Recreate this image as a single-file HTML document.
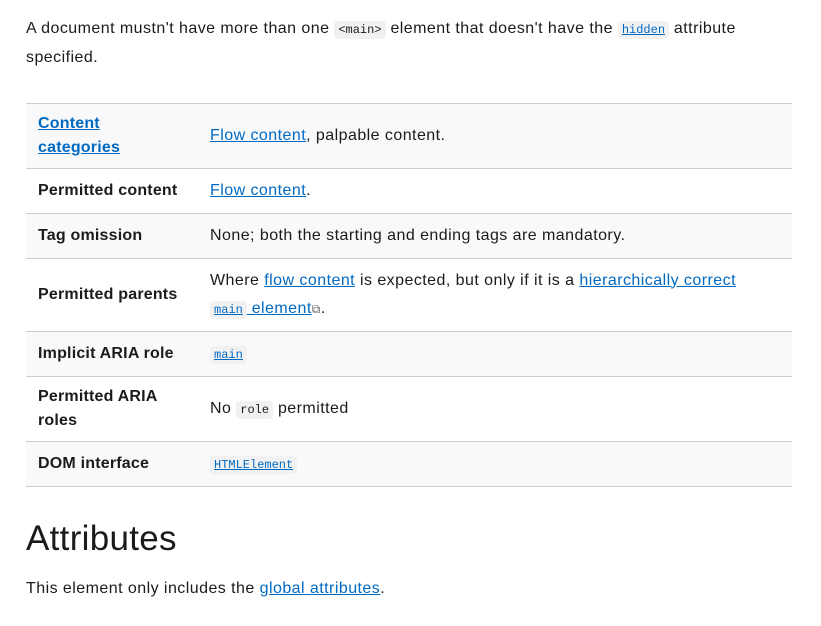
<!DOCTYPE html>
<html><head><meta charset="utf-8"><style>
body{margin:0;background:#fff;font-family:"Liberation Sans",sans-serif;color:#1b1b1b;font-size:16px;letter-spacing:0.45px;}
.w{position:absolute;left:26px;width:766px;}
p{margin:0;line-height:28px;}
a{color:#0069c2;text-decoration:underline;}
code{font-family:"Liberation Mono",monospace;font-size:12px;background:#f2f1f1;border-radius:4px;padding:2px 4px;letter-spacing:0;}
a code{color:#0069c2;}
table{border-collapse:collapse;width:766px;table-layout:fixed;}
td{border-top:1px solid #cdcdcd;border-bottom:1px solid #cdcdcd;padding:0 12px;line-height:24px;}
td:first-child{width:148px;font-weight:bold;letter-spacing:0.2px;}
tr:nth-child(odd) td{background:#f9f9fb;}
h2{margin:0;font-size:35px;font-weight:normal;letter-spacing:0.3px;}
</style></head><body>
<div class="w" style="top:15px"><p>A document mustn't have more than one <code>&lt;main&gt;</code> element that doesn't have the <a href="#"><code>hidden</code></a> attribute specified.</p></div>
<div class="w" style="top:103px"><table>
<tr style="height:65px"><td><a href="#">Content categories</a></td><td><a href="#">Flow content</a>, palpable content.</td></tr>
<tr style="height:45px"><td>Permitted content</td><td><a href="#">Flow content</a>.</td></tr>
<tr style="height:45px"><td>Tag omission</td><td>None; both the starting and ending tags are mandatory.</td></tr>
<tr style="height:73px"><td>Permitted parents</td><td style="line-height:28px">Where <a href="#">flow content</a> is expected, but only if it is a <a href="#">hierarchically correct<br><code>main</code> element</a><span style="font-size:12px;color:#666">⧉</span>.</td></tr>
<tr style="height:45px"><td>Implicit ARIA role</td><td><a href="#"><code>main</code></a></td></tr>
<tr style="height:65px"><td>Permitted ARIA roles</td><td>No <code>role</code> permitted</td></tr>
<tr style="height:45px"><td>DOM interface</td><td><a href="#"><code>HTMLElement</code></a></td></tr>
</table></div>
<div class="w" style="top:519px"><h2>Attributes</h2></div>
<div class="w" style="top:575px"><p>This element only includes the <a href="#">global attributes</a>.</p></div>
</body></html>
